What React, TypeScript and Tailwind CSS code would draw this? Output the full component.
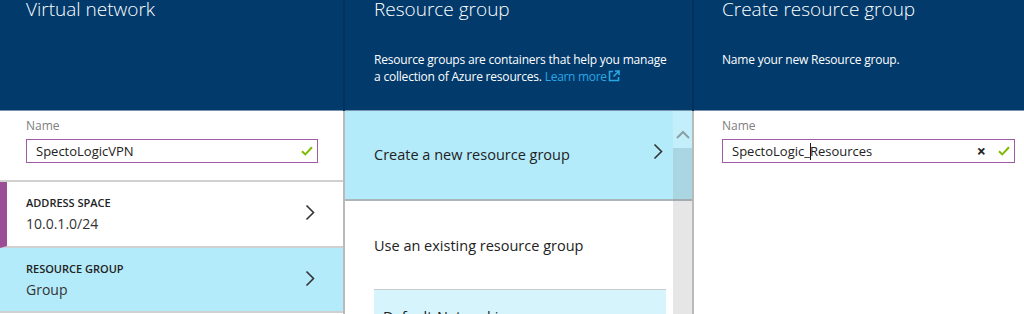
import React from "react";

const Chevron = () => (
  <svg width="10" height="17" viewBox="0 0 10 17" fill="none">
    <path d="M1.5 1.5 L8.5 8.5 L1.5 15.5" stroke="#333" strokeWidth="1.6" />
  </svg>
);

const Check = () => (
  <svg width="12" height="10" viewBox="0 0 12 10" fill="none">
    <path d="M1 5.2 L4.3 8.4 L11 1.3" stroke="#7fba00" strokeWidth="2" />
  </svg>
);

const ExternalIcon = () => (
  <svg width="12" height="12" viewBox="0 0 12 12" fill="none" className="inline-block ml-[1px] align-[-1px]">
    <path d="M5 1.5 H1.5 V10.5 H10.5 V7" stroke="#2aa8e6" strokeWidth="1.6" />
    <path d="M7 1 H11 V5 M11 1 L5.5 6.5" stroke="#2aa8e6" strokeWidth="1.6" />
  </svg>
);

const Header = ({ title, text, pl }: { title: string; text?: React.ReactNode; pl: string }) => (
  <div className={`h-[111px] shrink-0 bg-[#013a6b] border-b border-[#7893ae] text-white ${pl}`}>
    <div className="text-[19px] leading-[18px] font-light">{title}</div>
    {text && <div className="mt-[33px] text-[12px] leading-[17px] tracking-[-0.2px]">{text}</div>}
  </div>
);

const NameInput = ({ children, clear }: { children: React.ReactNode; clear?: boolean }) => (
  <div className="pt-[7px]">
    <div className="text-[12px] leading-4 text-[#808080]">Name</div>
    <div className="mt-[5px] h-[24px] border border-[#a05ba5] flex items-center pl-[9px] pr-[4px] bg-white">
      <div className="flex-1 pt-[2px] text-[13px] text-[#222] whitespace-nowrap">{children}</div>
      {clear && <span className="text-[16px] font-bold text-[#222] mr-[12px] leading-none">×</span>}
      <Check />
    </div>
  </div>
);

const Row = ({ label, value, active, bar }: { label: string; value: string; active?: boolean; bar?: boolean }) => (
  <div
    className={`flex items-start justify-between border-b-2 border-[#d0d0d0] pr-[28px] ${
      active ? "bg-[#b4ebfa] h-[65px]" : "bg-white h-[66px]"
    } ${bar ? "border-l-[7px] border-l-[#9b4e96] pl-[19px]" : "pl-[26px]"}`}
  >
    <div className="pt-[14px]">
      <div className="text-[11px] leading-[14px] font-semibold text-[#222]">{label}</div>
      <div className="mt-[4px] text-[14px] leading-[20px] text-[#333]">{value}</div>
    </div>
    <div className="pt-[22px]">
      <Chevron />
    </div>
  </div>
);

export default function App() {
  return (
    <div className="w-[1024px] h-[314px] overflow-hidden flex bg-white font-['Open_Sans',sans-serif]">
      {/* Virtual network */}
      <div className="w-[345px] shrink-0 flex flex-col">
        <div className="border-r-2 border-[#01325e]">
          <Header title="Virtual network" pl="pl-[26px]" />
        </div>
        <div className="flex-1 border-r-2 border-[#bababa]">
          <div className="pl-[26px] pr-[25px] pb-[17px] border-b-2 border-[#d0d0d0]">
            <NameInput>SpectoLogicVPN</NameInput>
          </div>
          <Row label="ADDRESS SPACE" value="10.0.1.0/24" bar />
          <Row label="RESOURCE GROUP" value="Group" active />
        </div>
      </div>

      {/* Resource group */}
      <div className="w-[349px] shrink-0 flex flex-col">
        <div className="border-r-2 border-[#01325e]">
          <Header
            title="Resource group"
            pl="pl-[29px]"
            text={
              <>
                Resource groups are containers that help you manage
                <br />a collection of Azure resources.{" "}
                <span className="text-[#2aa8e6] tracking-[-0.3px]">
                  Learn more
                  <ExternalIcon />
                </span>
              </>
            }
          />
        </div>
        <div className="flex-1 relative border-r-2 border-[#bababa] overflow-hidden">
          <div className="h-[90px] bg-[#b4ebfa] border-b-2 border-[#aab6b9] flex items-center justify-between pl-[29px] pr-[29px]">
            <span className="text-[14.5px] leading-5 text-[#222]">Create a new resource group</span>
            <div className="-mt-[8px]">
              <Chevron />
            </div>
          </div>
          <div className="pl-[29px] pt-[35px] text-[14.5px] leading-5 text-[#222]">Use an existing resource group</div>
          <div className="ml-[29px] mr-[26px] mt-[33px] h-[60px] border-t border-[#cccccc] bg-[#d5f4fc] pl-[9px] pt-[17px] text-[14.5px] leading-5 text-[#222]">
            Default-Networking
          </div>
          <div className="absolute right-0 top-0 bottom-0 w-[19px] flex flex-col">
            <div className="h-[37px] bg-white/20 flex justify-center pt-[19px]">
              <svg width="14" height="9" viewBox="0 0 14 9" fill="none">
                <path d="M1 8 L7 2 L13 8" stroke="#8aa0a6" strokeWidth="2" />
              </svg>
            </div>
            <div className="flex-1 bg-[#808080]/20" />
          </div>
        </div>
      </div>

      {/* Create resource group */}
      <div className="flex-1 flex flex-col">
        <Header title="Create resource group" pl="pl-[28px]" text="Name your new Resource group." />
        <div className="flex-1 pl-[28px] pr-[9px]">
          <NameInput clear>
            SpectoLogic_
            <span className="inline-block w-px -mr-px h-[17px] bg-[#1a1a1a] align-[-4px]" />
            Resources
          </NameInput>
        </div>
      </div>
    </div>
  );
}
